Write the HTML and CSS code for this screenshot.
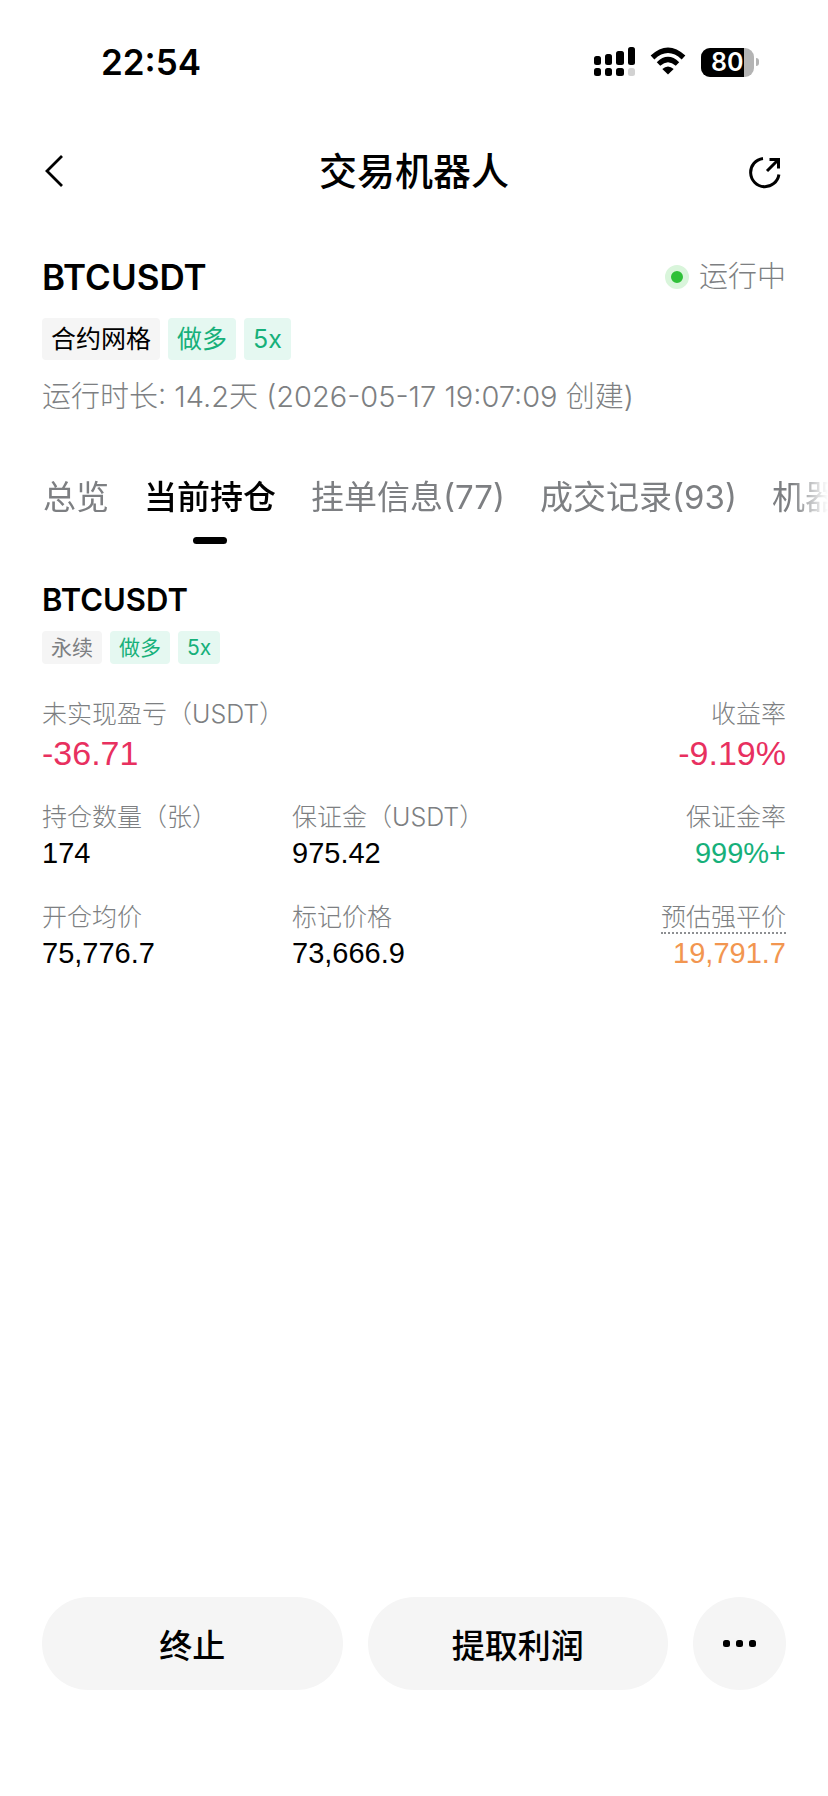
FILE: index.html
```html
<!DOCTYPE html>
<html lang="zh-CN">
<head>
  <meta charset="UTF-8" />
  <meta name="viewport" content="width=device-width, initial-scale=1.0"/>
  <title>交易机器人</title>
  <link rel="stylesheet" href="styles.css">
</head>
<body>
  <div class="status-bar">
    <span class="time">22:54</span>
    <div class="status-icons">
      <svg width="42" height="30" viewBox="0 0 42 30">
        <rect x="0" y="9" width="7" height="9" rx="2.5"/>
        <rect x="11" y="7" width="7" height="11" rx="2.5"/>
        <rect x="22" y="4" width="8" height="14" rx="2.5"/>
        <rect x="34" y="0" width="7" height="18" rx="2.5"/>
        <rect x="0" y="21" width="7" height="8" rx="2.5"/>
        <rect x="11" y="21" width="7" height="8" rx="2.5"/>
        <rect x="22" y="21" width="8" height="8" rx="2.5"/>
        <rect x="34" y="21" width="7" height="8" rx="2.5" fill="#d2d2d2"/>
      </svg>
      <svg class="wifi" width="36" height="30" viewBox="0 0 36 30">
        <path d="M2.5 10.5 Q18 -4 33.5 10.5" fill="none" stroke="#000" stroke-width="5.4"/>
        <path d="M8.5 17 Q18 8 27.5 17" fill="none" stroke="#000" stroke-width="5"/>
        <path d="M12.3 22 Q18 17 23.7 22 L18 27.5 Z"/>
      </svg>
      <div class="battery"><span class="level">80</span></div>
      <span class="battery-cap"></span>
    </div>
  </div>

  <header class="top-bar">
    <button class="icon-button" aria-label="返回">
      <svg width="22" height="34" viewBox="0 0 22 34">
        <path d="M18 2 L3 17 L18 32" fill="none" stroke="#000" stroke-width="2.8"/>
      </svg>
    </button>
    <h1>交易机器人</h1>
    <button class="icon-button" aria-label="分享">
      <svg width="36" height="36" viewBox="2 0 36 36" fill="none" stroke="#000" stroke-width="3">
        <path d="M17 5.4 A14.2 14.2 0 1 0 32.9 21.5"/>
        <path d="M21 18 L32 7"/>
        <path d="M23.5 6.5 H32.5 V15.5"/>
      </svg>
    </button>
  </header>

  <section class="summary">
    <div class="pair-row">
      <h2>BTCUSDT</h2>
      <span class="running"><i class="dot"></i>运行中</span>
    </div>
    <div class="tags">
      <span class="tag">合约网格</span>
      <span class="tag green">做多</span>
      <span class="tag green">5x</span>
    </div>
    <p class="duration">运行时长: 14.2天 (2026-05-17 19:07:09 创建)</p>
  </section>

  <nav class="tabs">
    <button class="tab">总览</button>
    <button class="tab active">当前持仓</button>
    <button class="tab">挂单信息(77)</button>
    <button class="tab">成交记录(93)</button>
    <button class="tab">机器人</button>
  </nav>

  <main class="position">
    <h3>BTCUSDT</h3>
    <div class="tags small">
      <span class="tag muted">永续</span>
      <span class="tag green">做多</span>
      <span class="tag green">5x</span>
    </div>

    <dl class="stats stats-main">
      <div><dt>未实现盈亏（USDT）</dt><dd class="red">-36.71</dd></div>
      <div class="right"><dt>收益率</dt><dd class="red">-9.19%</dd></div>
    </dl>
    <dl class="stats">
      <div><dt>持仓数量（张）</dt><dd>174</dd></div>
      <div><dt>保证金（USDT）</dt><dd>975.42</dd></div>
      <div class="right"><dt>保证金率</dt><dd class="up">999%+</dd></div>
      <div><dt>开仓均价</dt><dd>75,776.7</dd></div>
      <div><dt>标记价格</dt><dd>73,666.9</dd></div>
      <div class="right"><dt><span class="hint">预估强平价</span></dt><dd class="orange">19,791.7</dd></div>
    </dl>
  </main>

  <footer class="actions">
    <button class="action">终止</button>
    <button class="action">提取利润</button>
    <button class="action more" aria-label="更多">
      <svg width="34" height="7" viewBox="0 0 34 7">
        <rect x="0" y="0" width="7" height="7" rx="2.5"/>
        <rect x="13" y="0" width="7" height="7" rx="2.5"/>
        <rect x="26" y="0" width="7" height="7" rx="2.5"/>
      </svg>
    </button>
  </footer>
</body>
</html>
```
FILE: styles.css
```css
* {
  box-sizing: border-box;
}
body {
  margin: 0;
  min-height: 100vh;
  display: flex;
  flex-direction: column;
  font-family: Inter, 'Noto Sans CJK SC', sans-serif;
  color: #000;
  background: #fff;
  overflow-x: hidden;
}

h1, h2, h3, p, dl, dd {
  margin: 0;
}

button {
  border: none;
  padding: 0;
  background: none;
  font-family: inherit;
  color: inherit;
  cursor: pointer;
}

svg {
  display: block;
}

/* status bar */
.status-bar {
  display: flex;
  justify-content: space-between;
  align-items: center;
  height: 124px;
  padding: 0 69px 0 101px;
}
.time {
  font-size: 35px;
  font-weight: 600;
}
.status-icons {
  display: flex;
  align-items: center;
}
.wifi {
  margin: 0 15px 0 14px;
}
.battery {
  width: 53px;
  height: 29px;
  border-radius: 9px;
  background: #b4b4b4;
  overflow: hidden;
}
.level {
  display: block;
  width: 43px;
  padding-left: 10px;
  background: #000;
  color: #fff;
  font-size: 25px;
  font-weight: 600;
  line-height: 29px;
}
.battery-cap {
  width: 3px;
  height: 8px;
  margin-left: 2px;
  border-radius: 0 4px 4px 0;
  background: #b4b4b4;
}

/* title */
.top-bar {
  display: flex;
  justify-content: space-between;
  align-items: center;
  height: 94px;
  padding: 0 44px;
}
.top-bar h1 {
  font-size: 38px;
  font-weight: 500;
  line-height: 40px;
}
.icon-button {
  display: flex;
  width: 36px;
}

/* bot summary */
.summary {
  padding: 37px 42px 0;
}
.pair-row {
  display: flex;
  justify-content: space-between;
  align-items: center;
  height: 44px;
}
.pair-row h2 {
  font-size: 35px;
  font-weight: 600;
}
.running {
  display: flex;
  align-items: center;
  gap: 10px;
  font-size: 29px;
  font-weight: 300;
  line-height: 40px;
  color: #7d7f82;
}
.dot {
  width: 24px;
  height: 24px;
  border: 6px solid #d9f5db;
  border-radius: 50%;
  background: #2fc038;
}
.tags {
  display: flex;
  gap: 8px;
  margin-top: 19px;
}
.tag {
  padding: 0 9px;
  border-radius: 4px;
  background: #f5f5f5;
  font-size: 25px;
  line-height: 42px;
}
.tag.green {
  background: #e5f8f1;
  color: #16b07a;
}
.tag.muted {
  color: #7d7f82;
}
.duration {
  margin-top: 17px;
  font-size: 29px;
  font-weight: 300;
  line-height: 40px;
  color: #7d7f82;
}

/* tabs */
.tabs {
  display: flex;
  gap: 35px;
  margin-top: 60px;
  padding-left: 43px;
  overflow: hidden;
  -webkit-mask-image: linear-gradient(to left, transparent, #000 36px);
  mask-image: linear-gradient(to left, transparent, #000 36px);
}
.tab {
  display: flex;
  flex-direction: column;
  align-items: center;
  flex-shrink: 0;
  height: 68px;
  font-size: 33px;
  line-height: 40px;
  color: #7d7f82;
}
.tab.active {
  font-weight: 500;
  color: #000;
}
.tab.active::after {
  content: "";
  width: 34px;
  height: 7px;
  margin-top: 20px;
  border-radius: 4px;
  background: #000;
}

/* position */
.position {
  padding: 35px 42px 0;
}
.position h3 {
  font-size: 31px;
  font-weight: 600;
  line-height: 40px;
}
.tags.small {
  margin-top: 11px;
}
.small .tag {
  font-size: 21px;
  line-height: 33px;
}
.stats {
  display: grid;
  grid-template-columns: 1fr 1fr 1fr;
  gap: 31px 6px;
  margin-top: 29px;
}
.stats-main {
  grid-template-columns: 1fr 1fr;
  margin-top: 35px;
}
.right {
  text-align: right;
}
dt {
  font-size: 25px;
  font-weight: 300;
  line-height: 30px;
  color: #7d7f82;
}
dd {
  margin-top: 3px;
  font-family: 'Liberation Sans', Arial, sans-serif;
  font-size: 29px;
  line-height: 36px;
}
.stats-main dd {
  margin-top: 4px;
  font-size: 34px;
  line-height: 40px;
}
.hint {
  display: inline-block;
  height: 32px;
  margin-bottom: -2px;
  border-bottom: 2px dotted #8d8f92;
}
.red {
  color: #e8305f;
}
.up {
  color: #16b07a;
}
.orange {
  color: #f29650;
}

/* bottom buttons */
.actions {
  display: flex;
  gap: 25px;
  margin-top: auto;
  padding: 40px 42px 106px;
}
.action {
  flex: 1;
  height: 93px;
  border-radius: 47px;
  background: #f5f5f5;
  font-size: 33px;
  font-weight: 500;
}
.action.more {
  display: flex;
  flex: 0 0 93px;
  align-items: center;
  justify-content: center;
}
```
